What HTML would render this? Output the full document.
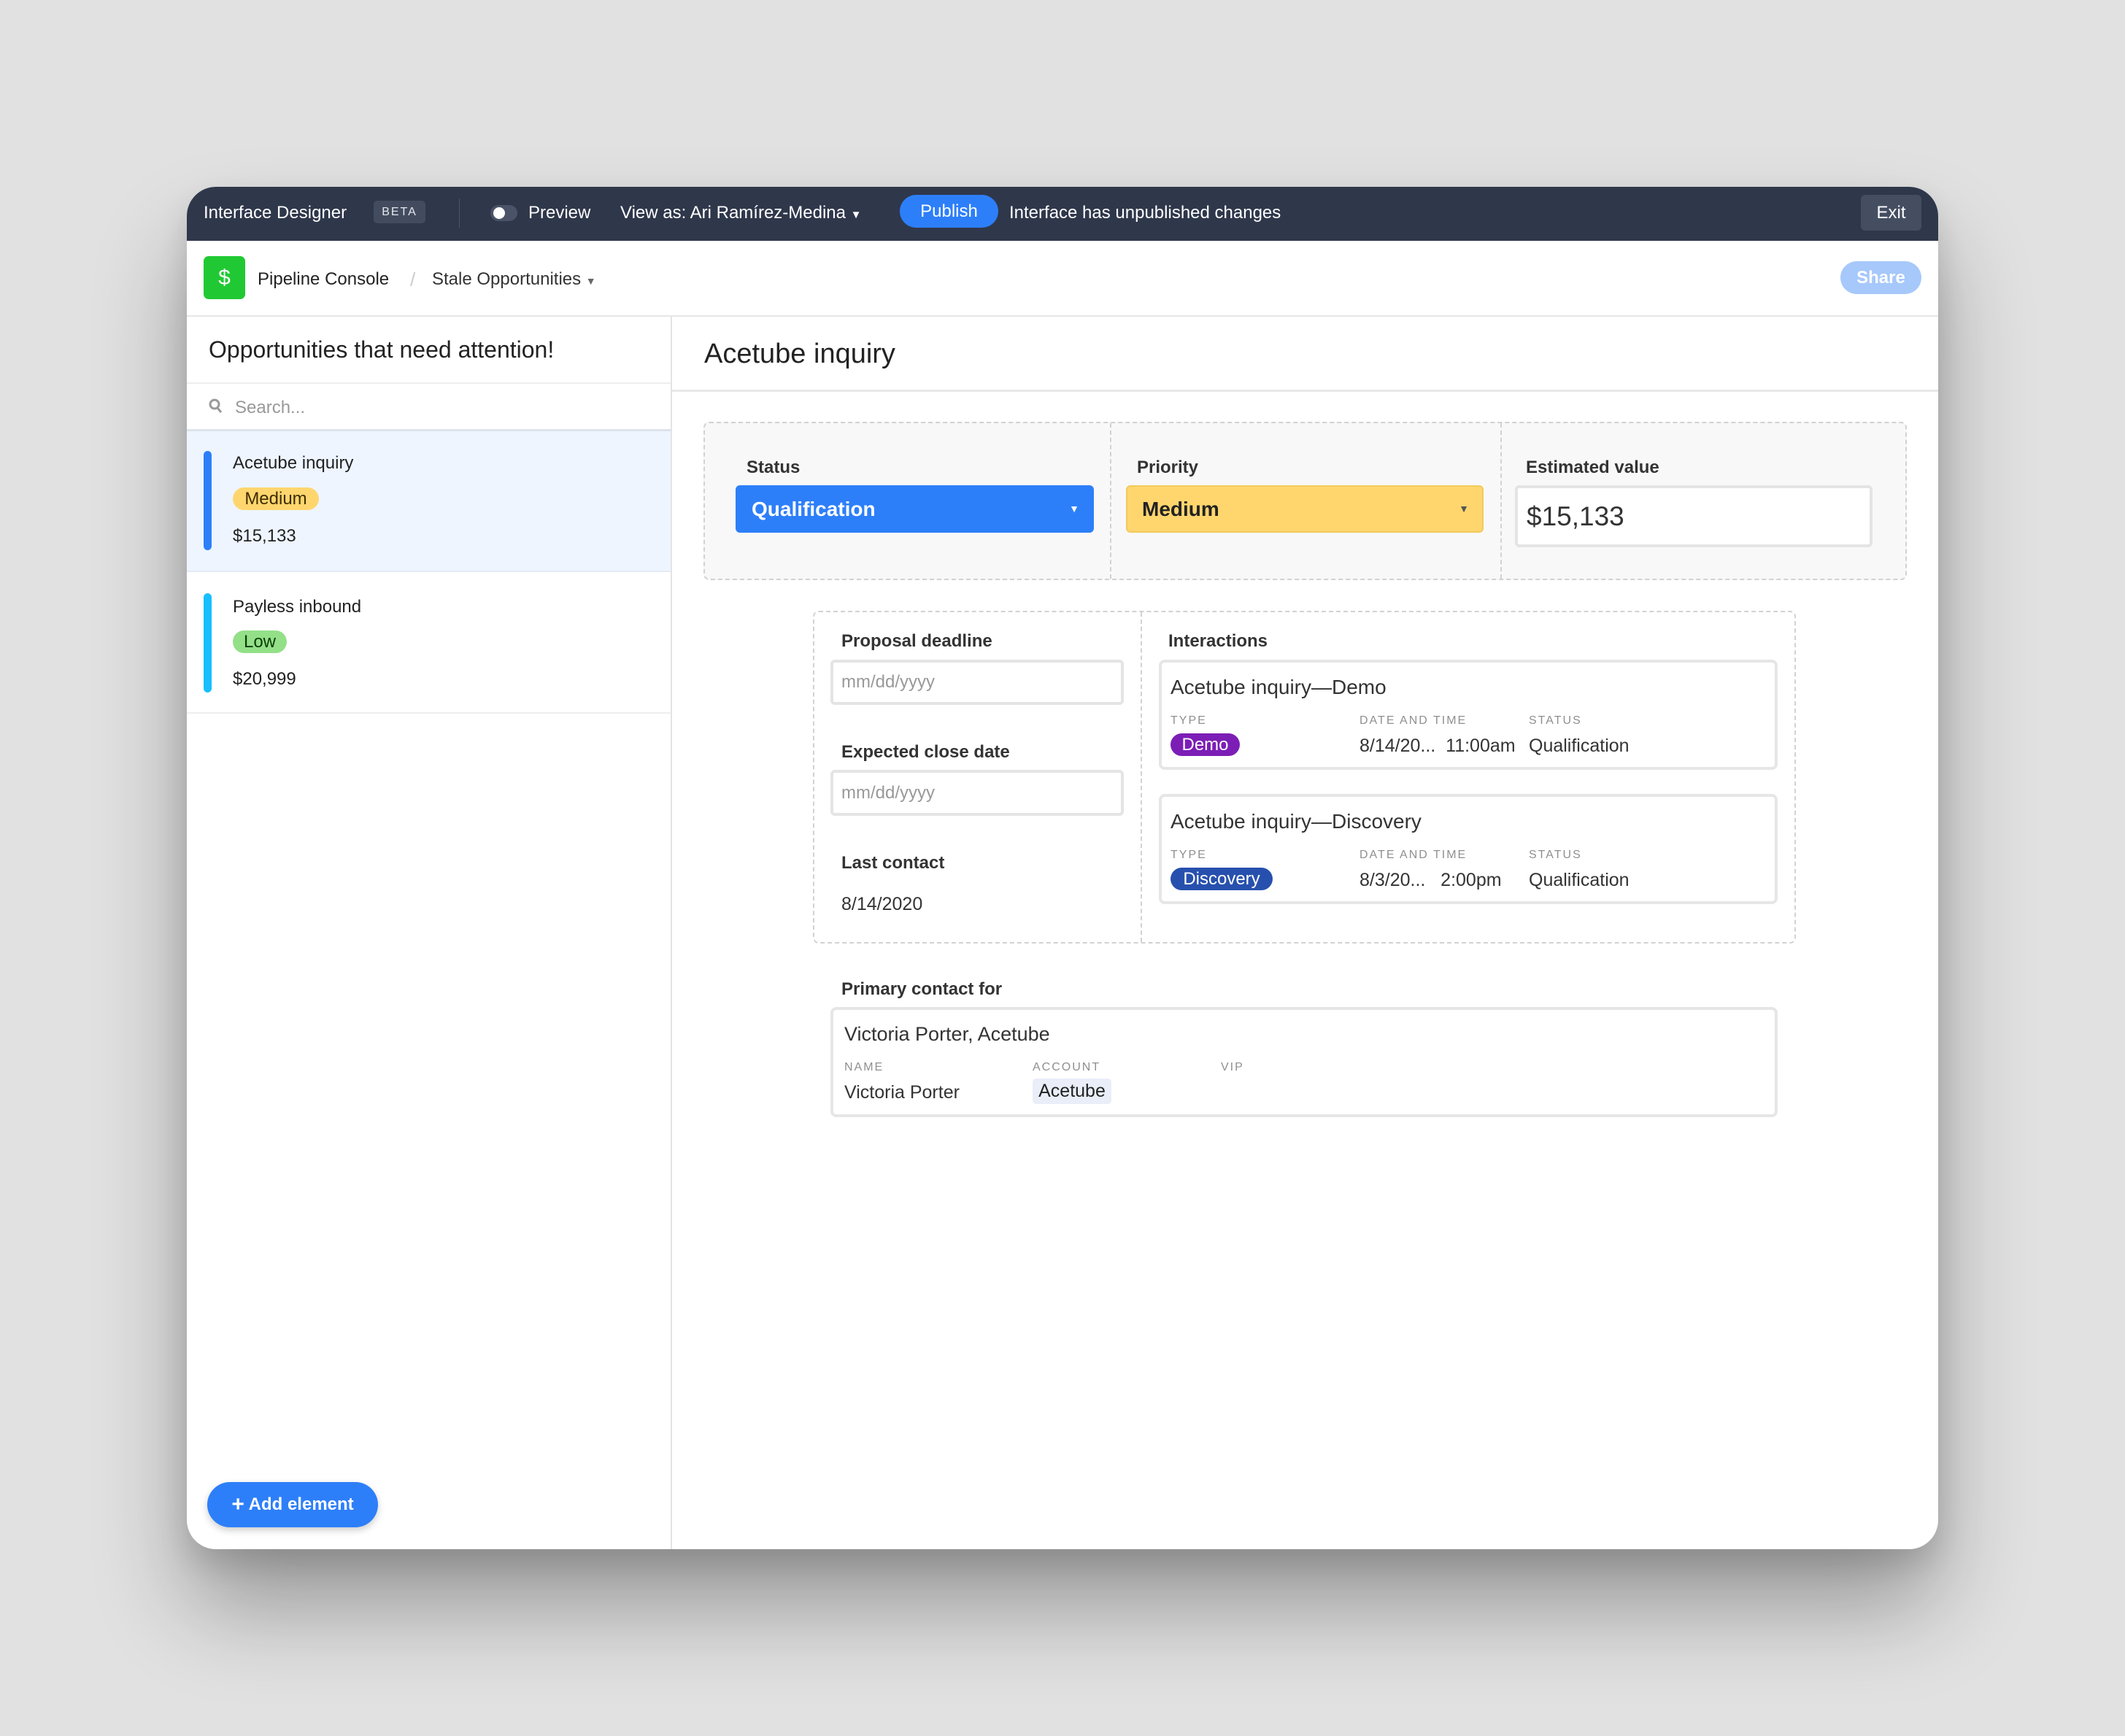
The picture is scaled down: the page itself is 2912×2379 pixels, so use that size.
<!DOCTYPE html>
<html><head><meta charset="utf-8"><style>
*{box-sizing:border-box;margin:0;padding:0}
body{width:2912px;height:2379px;background:#e1e1e1;font-family:"Liberation Sans",sans-serif;color:#333;position:relative;overflow:hidden}
.a{position:absolute;white-space:nowrap}
#win{position:absolute;left:256px;top:256px;width:2400px;height:1867px;background:#fff;border-radius:40px;overflow:hidden;box-shadow:0 80px 160px rgba(0,0,0,.32),0 20px 40px rgba(0,0,0,.12)}
.t{line-height:40px;margin-top:2px}
.lbl{font-size:24px;font-weight:bold;color:#333}
.cap{font-size:16px;letter-spacing:2px;color:#8f8f8f;line-height:20px;margin-top:2px}
.v{font-size:25px;color:#333}
.dash{border:2px dashed #d2d2d2}
.card{background:#fff;border:4px solid #e6e6e6;border-radius:8px}
.inp{background:#fff;border:4px solid #e4e4e4;border-radius:6px}
.pill{border-radius:16px;font-size:24px;text-align:center;line-height:31px}
</style></head><body>
<div id="win">
 <div class="a" style="left:0;top:0;width:2400px;height:74px;background:#2f374b"></div>
 <div class="a t" style="left:23px;top:14px;font-size:24px;color:#fff">Interface Designer</div>
 <div class="a" style="left:256px;top:19px;width:71px;height:31px;background:#434c5f;border-radius:5px;color:#e5e7ec;font-size:16px;letter-spacing:2px;text-align:center;line-height:31px">BETA</div>
 <div class="a" style="left:373px;top:16px;width:1px;height:40px;background:#4b5468"></div>
 <div class="a" style="left:416px;top:25px;width:37px;height:22px;background:#4a5367;border-radius:11px"></div>
 <div class="a" style="left:420px;top:28px;width:16px;height:16px;background:#fff;border-radius:8px"></div>
 <div class="a t" style="left:468px;top:14px;font-size:24px;color:#fff">Preview</div>
 <div class="a t" style="left:594px;top:14px;font-size:24px;color:#fff">View as: Ari Ramírez-Medina <span style="font-size:15px">▼</span></div>
 <div class="a" style="left:977px;top:11px;width:135px;height:45px;background:#2d7ff9;border-radius:23px;color:#fff;font-size:24px;text-align:center;line-height:45px">Publish</div>
 <div class="a t" style="left:1127px;top:14px;font-size:24px;color:#fff">Interface has unpublished changes</div>
 <div class="a" style="left:2294px;top:11px;width:83px;height:49px;background:#454e61;border-radius:6px;color:#fff;font-size:24px;text-align:center;line-height:49px">Exit</div>
 <div class="a" style="left:0;top:176px;width:2400px;height:2px;background:#e6e6e6"></div>
 <div class="a" style="left:23px;top:95px;width:57px;height:59px;background:#20c933;border-radius:7px;color:#fff;font-size:30px;text-align:center;line-height:59px">$</div>
 <div class="a t" style="left:97px;top:105px;font-size:24px;color:#222">Pipeline Console</div>
 <div class="a t" style="left:306px;top:105px;font-size:26px;color:#ccc">/</div>
 <div class="a t" style="left:336px;top:105px;font-size:24px;color:#333">Stale Opportunities <span style="font-size:14px;color:#666">▼</span></div>
 <div class="a" style="left:2266px;top:102px;width:111px;height:45px;background:#a6c8fb;border-radius:23px;color:#fff;font-size:24px;font-weight:bold;text-align:center;line-height:45px">Share</div>
 <div class="a" style="left:663px;top:178px;width:2px;height:1700px;background:#e4e4e4"></div>
 <div class="a t" style="left:30px;top:201px;font-size:32px;color:#222">Opportunities that need attention!</div>
 <div class="a" style="left:0;top:268px;width:663px;height:2px;background:#eeeeee"></div>
 <svg class="a" style="left:30px;top:290px" width="20" height="22" viewBox="0 0 20 22"><circle cx="8" cy="8" r="6" fill="none" stroke="#999" stroke-width="3"/><path d="M12 13l5 6" stroke="#999" stroke-width="3"/></svg>
 <div class="a t" style="left:66px;top:281px;font-size:24px;color:#999">Search...</div>
 <div class="a" style="left:0;top:332px;width:663px;height:196px;background:#eef5ff;border-top:3px solid #dde3ea;border-bottom:2px solid #e3ebf5"></div>
 <div class="a" style="left:23px;top:362px;width:11px;height:136px;background:#2d7ff9;border-radius:6px"></div>
 <div class="a t" style="left:63px;top:357px;font-size:24px;color:#222">Acetube inquiry</div>
 <div class="a pill" style="left:63px;top:412px;width:118px;background:#ffd66e;color:#3d2c00">Medium</div>
 <div class="a t" style="left:63px;top:457px;font-size:24px;color:#222">$15,133</div>
 <div class="a" style="left:23px;top:557px;width:11px;height:136px;background:#18bfff;border-radius:6px"></div>
 <div class="a t" style="left:63px;top:554px;font-size:24px;color:#222">Payless inbound</div>
 <div class="a pill" style="left:63px;top:608px;width:74px;background:#93e088;color:#0b3c05">Low</div>
 <div class="a t" style="left:63px;top:653px;font-size:24px;color:#222">$20,999</div>
 <div class="a" style="left:0;top:720px;width:663px;height:2px;background:#eeeeee"></div>
 <div class="a" style="left:28px;top:1775px;width:234px;height:62px;background:#2d7ff9;border-radius:31px;color:#fff;font-size:24px;font-weight:bold;text-align:center;line-height:62px;box-shadow:0 4px 10px rgba(0,0,0,.2)"><span style="font-size:30px;vertical-align:-2px">+</span> Add element</div>
 <div class="a t" style="left:709px;top:207px;font-size:38px;color:#222;line-height:40px">Acetube inquiry</div>
 <div class="a" style="left:665px;top:278px;width:1735px;height:3px;background:#e8e8e8"></div>
 <div class="a dash" style="left:708px;top:322px;width:1649px;height:217px;background:#f8f8f8;border-radius:8px"></div>
 <div class="a" style="left:1265px;top:324px;height:213px;border-left:2px dashed #d2d2d2"></div>
 <div class="a" style="left:1800px;top:324px;height:213px;border-left:2px dashed #d2d2d2"></div>
 <div class="a t lbl" style="left:767px;top:363px">Status</div>
 <div class="a" style="left:752px;top:409px;width:491px;height:65px;background:#2d7ff9;border-radius:6px;color:#fff;font-size:28px;font-weight:bold;line-height:65px;padding-left:22px">Qualification<span style="position:absolute;right:20px;font-size:14px">▼</span></div>
 <div class="a t lbl" style="left:1302px;top:363px">Priority</div>
 <div class="a" style="left:1287px;top:409px;width:490px;height:65px;background:#ffd66e;border:2px solid #f2c95e;border-radius:6px;color:#222;font-size:28px;font-weight:bold;line-height:61px;padding-left:20px">Medium<span style="position:absolute;right:18px;font-size:14px;color:#555">▼</span></div>
 <div class="a t lbl" style="left:1835px;top:363px">Estimated value</div>
 <div class="a inp" style="left:1820px;top:409px;width:490px;height:85px;font-size:37px;line-height:77px;padding-left:12px;color:#333">$15,133</div>
 <div class="a dash" style="left:858px;top:581px;width:1347px;height:456px;border-radius:8px"></div>
 <div class="a" style="left:1307px;top:583px;height:452px;border-left:2px dashed #d2d2d2"></div>
 <div class="a t lbl" style="left:897px;top:601px">Proposal deadline</div>
 <div class="a inp" style="left:882px;top:648px;width:402px;height:62px;font-size:24px;color:#999;line-height:54px;padding-left:11px">mm/dd/yyyy</div>
 <div class="a t lbl" style="left:897px;top:753px">Expected close date</div>
 <div class="a inp" style="left:882px;top:799px;width:402px;height:63px;font-size:24px;color:#999;line-height:55px;padding-left:11px">mm/dd/yyyy</div>
 <div class="a t lbl" style="left:897px;top:905px">Last contact</div>
 <div class="a t v" style="left:897px;top:961px">8/14/2020</div>
 <div class="a t lbl" style="left:1345px;top:601px">Interactions</div>
 <div class="a card" style="left:1332px;top:648px;width:848px;height:151px"></div>
 <div class="a t" style="left:1348px;top:664px;font-size:28px;color:#333">Acetube inquiry—Demo</div>
 <div class="a cap" style="left:1348px;top:720px">TYPE</div>
 <div class="a cap" style="left:1607px;top:720px">DATE AND TIME</div>
 <div class="a cap" style="left:1839px;top:720px">STATUS</div>
 <div class="a pill" style="left:1348px;top:749px;width:95px;background:#7c1eb6;color:#fff">Demo</div>
 <div class="a t v" style="left:1607px;top:744px">8/14/20...&nbsp; 11:00am</div>
 <div class="a t v" style="left:1839px;top:744px">Qualification</div>
 <div class="a card" style="left:1332px;top:832px;width:848px;height:151px"></div>
 <div class="a t" style="left:1348px;top:848px;font-size:28px;color:#333">Acetube inquiry—Discovery</div>
 <div class="a cap" style="left:1348px;top:904px">TYPE</div>
 <div class="a cap" style="left:1607px;top:904px">DATE AND TIME</div>
 <div class="a cap" style="left:1839px;top:904px">STATUS</div>
 <div class="a pill" style="left:1348px;top:933px;width:140px;background:#2750ae;color:#fff">Discovery</div>
 <div class="a t v" style="left:1607px;top:928px">8/3/20...&nbsp;&nbsp; 2:00pm</div>
 <div class="a t v" style="left:1839px;top:928px">Qualification</div>
 <div class="a t lbl" style="left:897px;top:1078px">Primary contact for</div>
 <div class="a card" style="left:882px;top:1124px;width:1298px;height:151px"></div>
 <div class="a t" style="left:901px;top:1139px;font-size:27px;color:#333">Victoria Porter, Acetube</div>
 <div class="a cap" style="left:901px;top:1195px">NAME</div>
 <div class="a cap" style="left:1159px;top:1195px">ACCOUNT</div>
 <div class="a cap" style="left:1417px;top:1195px">VIP</div>
 <div class="a t v" style="left:901px;top:1219px">Victoria Porter</div>
 <div class="a" style="left:1159px;top:1222px;width:108px;height:35px;background:#e9eef9;border-radius:5px;font-size:25px;text-align:center;line-height:35px;color:#222">Acetube</div>
</div>
</body></html>
